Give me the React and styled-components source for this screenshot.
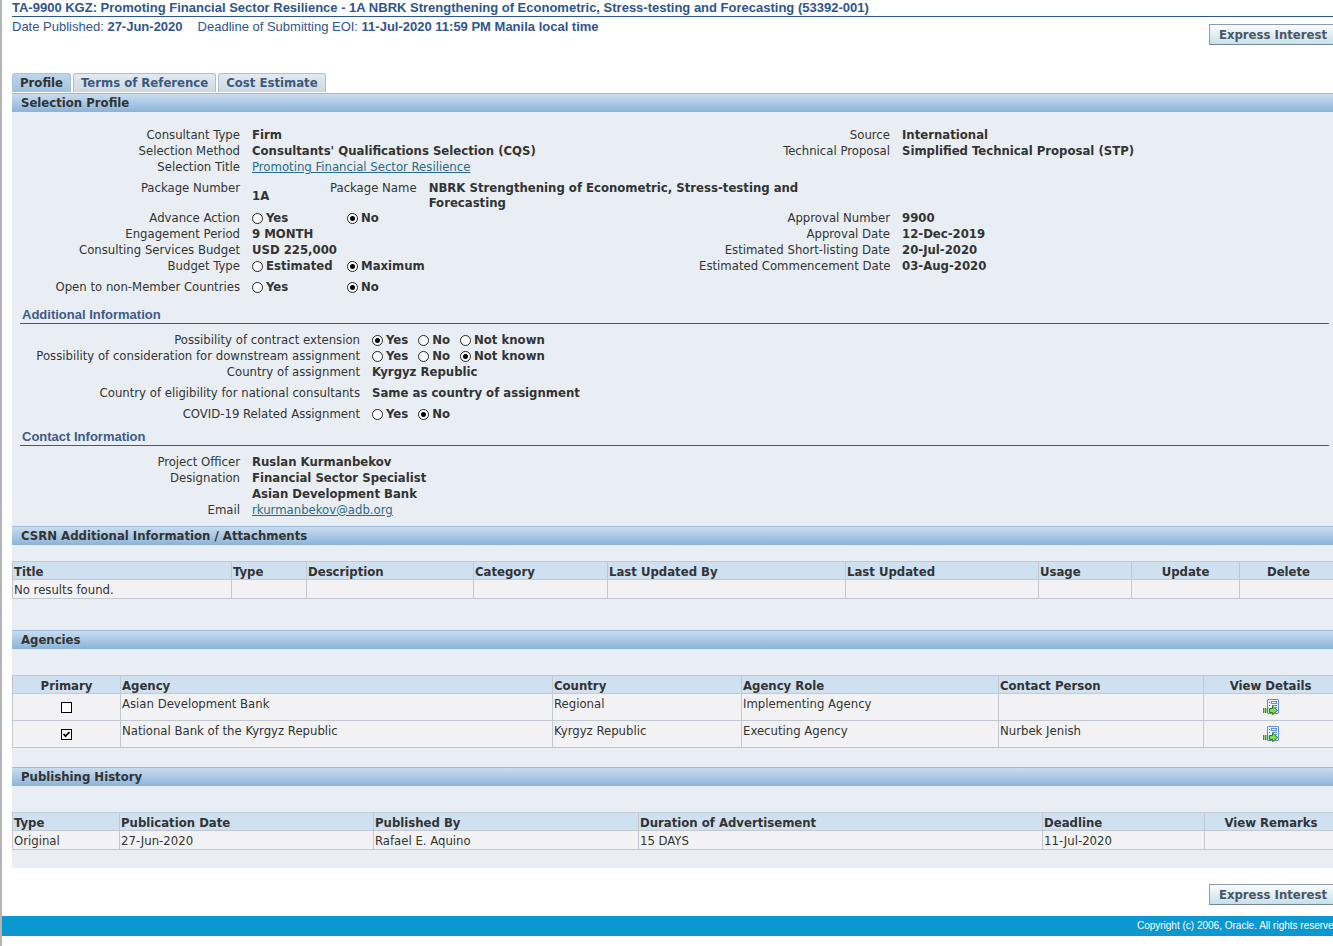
import React from 'react';
import styled, { createGlobalStyle, css } from 'styled-components';

const tahoma = "'DejaVu Sans Condensed', 'DejaVu Sans', sans-serif";
const arial = "'Liberation Sans', Arial, sans-serif";

const GlobalStyle = createGlobalStyle`
    * {
        box-sizing: border-box;
    }

    body {
        margin: 0;
        background: #fff;
        color: #333;
        font-family: ${tahoma};
        font-size: 13px;
        line-height: 16px;
        overflow-x: hidden;
    }
`

const Page = styled.div`
    width: calc(100% + 4px);
    min-height: 100vh;
    border-left: 2px solid #b4b4b4;
`

const Content = styled.div`
    padding-left: 10px;
`

const Title = styled.h1`
    margin: 0;
    border-bottom: 1px solid #2f5590;
    color: #2f5590;
    font: bold 13px/16px ${arial};
`

const SubTitle = styled.div`
    display: flex;
    justify-content: space-between;
    align-items: flex-start;
    padding-top: 2px;
    color: #2f5590;
    font: 13px/16px ${arial};
`

const Dates = styled.div`
    display: flex;
    gap: 15px;
`

const ExpressButton = styled.button`
    height: 21px;
    padding: 0 9px;
    border: 1px solid #8d9bb3;
    border-bottom: 1px solid #76849c;
    background: linear-gradient(#fbfdfe, #c6e0e8);
    color: #4a5568;
    font: bold 13px/16px ${tahoma};
    white-space: nowrap;
    cursor: pointer;
`

const TopButton = styled(ExpressButton)`
    margin-top: 5px;
`

const Tabs = styled.div`
    display: flex;
    gap: 2px;
    margin-top: 28px;
    padding-bottom: 1px;
`

const Tab = styled.button`
    height: 19px;
    padding: 0 7px;
    border: 1px solid #b4bcc6;
    border-bottom: 0;
    border-radius: 3px 3px 0 0;
    background: linear-gradient(#e2eaf1, #cdd8e1);
    color: #3c5a80;
    font: bold 13px/16px ${tahoma};
    white-space: nowrap;
    cursor: pointer;

    ${({ $active }) => $active && css`
        border-color: #a9c3dc;
        background: linear-gradient(#bdd6ec, #9fc3e2);
        color: #333;
    `}
`

const Panel = styled.main`
    padding-bottom: 18px;
    background: #e9eef5;
`

const Bar = styled.h2`
    margin: 0;
    padding: 1px 9px;
    border-top: 1px solid #9dbbdc;
    background: linear-gradient(#c9dcee, #8ab4da);
    color: #333;
    font: bold 13px/16px ${tahoma};
`

const Form = styled.div`
    padding: ${({ $pad }) => $pad};
`

const rowLayouts = {
    profile: '228px 1fr 191px 1fr',
    additional: '348px 1fr',
    contact: '228px 1fr',
};

const Row = styled.div`
    display: grid;
    grid-template-columns: ${({ $layout }) => rowLayouts[$layout]};
    column-gap: 12px;
    margin-top: ${({ $spaced }) => $spaced ? '5px' : 0};
`

const Label = styled.span`
    text-align: right;
    white-space: nowrap;
`

const Value = styled.div`
    font-weight: bold;
    white-space: nowrap;
`

const Package = styled.div`
    display: flex;
    grid-column: 2 / -1;
    gap: 12px;
    line-height: 15px;
`

const PackageNumber = styled(Value)`
    width: 66px;
    align-self: center;
`

const PackageName = styled(Value)`
    max-width: 380px;
    white-space: normal;
`

const Anchor = styled.a`
    color: #2a6a88;
    font-weight: normal;
    text-decoration: underline;
`

const Options = styled.div`
    display: flex;
    gap: ${({ $wide }) => $wide ? 0 : '10px'};
`

const Option = styled.label`
    display: flex;
    align-items: center;
    gap: 3px;
    min-width: ${({ $wide }) => $wide ? '95px' : 0};
    font-weight: bold;
`

const Radio = styled.input`
    appearance: none;
    width: 11px;
    height: 11px;
    margin: 0;
    border: 1px solid #222;
    border-radius: 50%;
    background: #fff;

    &:checked {
        background: radial-gradient(circle, #000 0 2px, #fff 3px);
    }
`

const SubHeader = styled.h3`
    margin: 0 8px;
    padding-left: 2px;
    border-bottom: 1px solid #3c5a90;
    color: #3c5a8c;
    font: bold 13px/16px ${arial};
`

const Table = styled.table`
    width: 100%;
    margin-top: ${({ $top }) => $top};
    border-collapse: collapse;
    table-layout: fixed;
    background: #f2f2f5;
`

const Col = styled.col`
    width: ${({ $w }) => $w}px;
`

const HeadRow = styled.tr`
    height: 18px;
    background: #cfe0f1;
`

const BodyRow = styled.tr`
    height: ${({ $tall }) => $tall ? '27px' : '19px'};
`

const Th = styled.th`
    padding: 2px 1px 0;
    border: 1px solid #c3c9d3;
    font: bold 13px/15px ${tahoma};
    text-align: ${({ $center }) => $center ? 'center' : 'left'};
    white-space: nowrap;
`

const Td = styled.td`
    padding: 2px 1px 0;
    border: 1px solid #c3c9d3;
    text-align: ${({ $center }) => $center ? 'center' : 'left'};
    vertical-align: top;
    white-space: nowrap;
`

const CheckBox = styled.input`
    appearance: none;
    display: block;
    width: 11px;
    height: 11px;
    margin: 6px auto 0;
    border: 1px solid #000;
    background: #fff;

    &:checked {
        background: #fff url("data:image/svg+xml,%3Csvg xmlns='http://www.w3.org/2000/svg' viewBox='0 0 9 9'%3E%3Cpath d='M1.5 4L3.5 6.2L7.5 2' fill='none' stroke='black' stroke-width='1.8'/%3E%3C/svg%3E");
    }
`

const IconLink = styled.a`
    display: inline-block;
    height: 16px;
    margin-top: 3px;

    svg {
        display: block;
    }
`

const Bottom = styled.div`
    display: flex;
    justify-content: flex-end;
    padding: 16px 0 11px;
`

const Footer = styled.footer`
    height: 20px;
    margin-right: -5px;
    background: #0b97d0;
    color: #fff;
    font: 10px/20px ${arial};
    text-align: right;
    white-space: nowrap;
`

const RadioGroup = ({ name, options, checked, wide }) => (
    <Options $wide={wide} role="radiogroup" aria-label={name}>
        {options.map((option) => (
            <Option key={option} $wide={wide}>
                <Radio type="radio" name={name} defaultChecked={option === checked} />
                {option}
            </Option>
        ))}
    </Options>
)

const DetailsIcon = () => (
    <svg width="16" height="16" viewBox="0 0 16 16">
        <rect x="4.5" y="0.5" width="11" height="14" rx="0.5" fill="#eaf2ff" stroke="#5b8fe0" />
        <path d="M6 3.5h1M6 6.5h1" stroke="#3f6fc4" />
        <rect x="8.5" y="2.5" width="5" height="2" fill="#fff" stroke="#5b8fe0" />
        <path d="M9 6.5h5M12 8.5h2" stroke="#5b8fe0" />
        <path d="M0.5 9v5M2.5 9v5M4.5 9v5" stroke="#2f9e14" strokeWidth="1.4" />
        <path d="M6.5 9.5h3v-2.5l5 4.5-5 4.2v-2.2h-3z" fill="#86dc50" stroke="#238210" />
    </svg>
)

const profileTop = [
    ['Consultant Type', 'Firm', 'Source', 'International'],
    ['Selection Method', "Consultants' Qualifications Selection (CQS)", 'Technical Proposal', 'Simplified Technical Proposal (STP)'],
    ['Selection Title', <Anchor href="#project">Promoting Financial Sector Resilience</Anchor>],
];

const profileBottom = [
    ['Advance Action', <RadioGroup wide name="Advance Action" options={['Yes', 'No']} checked="No" />, 'Approval Number', '9900'],
    ['Engagement Period', '9 MONTH', 'Approval Date', '12-Dec-2019'],
    ['Consulting Services Budget', 'USD 225,000', 'Estimated Short-listing Date', '20-Jul-2020'],
    ['Budget Type', <RadioGroup wide name="Budget Type" options={['Estimated', 'Maximum']} checked="Maximum" />, 'Estimated Commencement Date', '03-Aug-2020'],
];

const yesNoUnknown = ['Yes', 'No', 'Not known'];

const ProfileRow = ({ cells }) => (
    <Row $layout="profile">
        {cells.map((cell, index) => (
            index % 2 === 0 ? <Label key={index}>{cell}</Label> : <Value key={index}>{cell}</Value>
        ))}
    </Row>
)

const Field = ({ layout, label, spaced, children }) => (
    <Row $layout={layout} $spaced={spaced}>
        <Label>{label}</Label>
        <Value>{children}</Value>
    </Row>
)

const DataTable = ({ columns, rows, top, tall }) => (
    <Table $top={top}>
        <colgroup>
            {columns.map((column) => <Col key={column.title} $w={column.width} />)}
        </colgroup>
        <thead>
            <HeadRow>
                {columns.map((column) => (
                    <Th key={column.title} scope="col" $center={column.center}>{column.title}</Th>
                ))}
            </HeadRow>
        </thead>
        <tbody>
            {rows.map((row, index) => (
                <BodyRow key={index} $tall={tall}>
                    {columns.map((column, i) => (
                        <Td key={column.title} $center={column.center}>{row[i]}</Td>
                    ))}
                </BodyRow>
            ))}
        </tbody>
    </Table>
)

const attachmentColumns = [
    { title: 'Title', width: 219 },
    { title: 'Type', width: 75 },
    { title: 'Description', width: 167 },
    { title: 'Category', width: 134 },
    { title: 'Last Updated By', width: 238 },
    { title: 'Last Updated', width: 193 },
    { title: 'Usage', width: 93 },
    { title: 'Update', width: 108, center: true },
    { title: 'Delete', width: 98, center: true },
];

const agencyColumns = [
    { title: 'Primary', width: 108, center: true },
    { title: 'Agency', width: 432 },
    { title: 'Country', width: 189 },
    { title: 'Agency Role', width: 257 },
    { title: 'Contact Person', width: 205 },
    { title: 'View Details', width: 134, center: true },
];

const historyColumns = [
    { title: 'Type', width: 107 },
    { title: 'Publication Date', width: 254 },
    { title: 'Published By', width: 265 },
    { title: 'Duration of Advertisement', width: 404 },
    { title: 'Deadline', width: 162 },
    { title: 'View Remarks', width: 133, center: true },
];

const agencies = [
    { name: 'Asian Development Bank', country: 'Regional', role: 'Implementing Agency' },
    { name: 'National Bank of the Kyrgyz Republic', country: 'Kyrgyz Republic', role: 'Executing Agency', contact: 'Nurbek Jenish', primary: true },
];

const agencyRows = agencies.map((agency) => [
    <CheckBox type="checkbox" aria-label={`Primary: ${agency.name}`} defaultChecked={agency.primary} />,
    agency.name,
    agency.country,
    agency.role,
    agency.contact,
    <IconLink href="#details" aria-label={`View details: ${agency.name}`}><DetailsIcon /></IconLink>,
]);

const App = () => {
    return (
        <Page>
            <GlobalStyle />
            <Content>
                <Title>TA-9900 KGZ: Promoting Financial Sector Resilience - 1A NBRK Strengthening of Econometric, Stress-testing and Forecasting (53392-001)</Title>
                <SubTitle>
                    <Dates>
                        <span>Date Published: <b>27-Jun-2020</b></span>
                        <span>Deadline of Submitting EOI: <b>11-Jul-2020 11:59 PM Manila local time</b></span>
                    </Dates>
                    <TopButton type="button">Express Interest</TopButton>
                </SubTitle>
                <Tabs>
                    <Tab type="button" $active>Profile</Tab>
                    <Tab type="button">Terms of Reference</Tab>
                    <Tab type="button">Cost Estimate</Tab>
                </Tabs>
                <Panel>
                    <Bar>Selection Profile</Bar>
                    <Form $pad="15px 0 12px">
                        {profileTop.map((cells) => <ProfileRow key={cells[0]} cells={cells} />)}
                        <Row $layout="profile" $spaced>
                            <Label>Package Number</Label>
                            <Package>
                                <PackageNumber>1A</PackageNumber>
                                <Label>Package Name</Label>
                                <PackageName>NBRK Strengthening of Econometric, Stress-testing and Forecasting</PackageName>
                            </Package>
                        </Row>
                        {profileBottom.map((cells) => <ProfileRow key={cells[0]} cells={cells} />)}
                        <Field layout="contact" label="Open to non-Member Countries" spaced>
                            <RadioGroup wide name="Open to non-Member Countries" options={['Yes', 'No']} checked="No" />
                        </Field>
                    </Form>
                    <SubHeader>Additional Information</SubHeader>
                    <Form $pad="8px 0 7px">
                        <Field layout="additional" label="Possibility of contract extension">
                            <RadioGroup name="Possibility of contract extension" options={yesNoUnknown} checked="Yes" />
                        </Field>
                        <Field layout="additional" label="Possibility of consideration for downstream assignment">
                            <RadioGroup name="Possibility of consideration for downstream assignment" options={yesNoUnknown} checked="Not known" />
                        </Field>
                        <Field layout="additional" label="Country of assignment">Kyrgyz Republic</Field>
                        <Field layout="additional" label="Country of eligibility for national consultants" spaced>Same as country of assignment</Field>
                        <Field layout="additional" label="COVID-19 Related Assignment" spaced>
                            <RadioGroup name="COVID-19 Related Assignment" options={['Yes', 'No']} checked="No" />
                        </Field>
                    </Form>
                    <SubHeader>Contact Information</SubHeader>
                    <Form $pad="8px 0">
                        <Field layout="contact" label="Project Officer">Ruslan Kurmanbekov</Field>
                        <Field layout="contact" label="Designation">Financial Sector Specialist</Field>
                        <Field layout="contact">Asian Development Bank</Field>
                        <Field layout="contact" label="Email"><Anchor href="mailto:rkurmanbekov@adb.org">rkurmanbekov@adb.org</Anchor></Field>
                    </Form>
                    <Bar>CSRN Additional Information / Attachments</Bar>
                    <DataTable top="16px" columns={attachmentColumns} rows={[['No results found.']]} />
                    <Form $pad="31px 0 0">
                        <Bar>Agencies</Bar>
                        <DataTable top="26px" columns={agencyColumns} rows={agencyRows} tall />
                    </Form>
                    <Form $pad="19px 0 0">
                        <Bar>Publishing History</Bar>
                        <DataTable
                            top="26px"
                            columns={historyColumns}
                            rows={[['Original', '27-Jun-2020', 'Rafael E. Aquino', '15 DAYS', '11-Jul-2020']]}
                        />
                    </Form>
                </Panel>
                <Bottom>
                    <ExpressButton type="button">Express Interest</ExpressButton>
                </Bottom>
            </Content>
            <Footer>Copyright (c) 2006, Oracle. All rights reserved.</Footer>
        </Page>
    )
}

export default App;
